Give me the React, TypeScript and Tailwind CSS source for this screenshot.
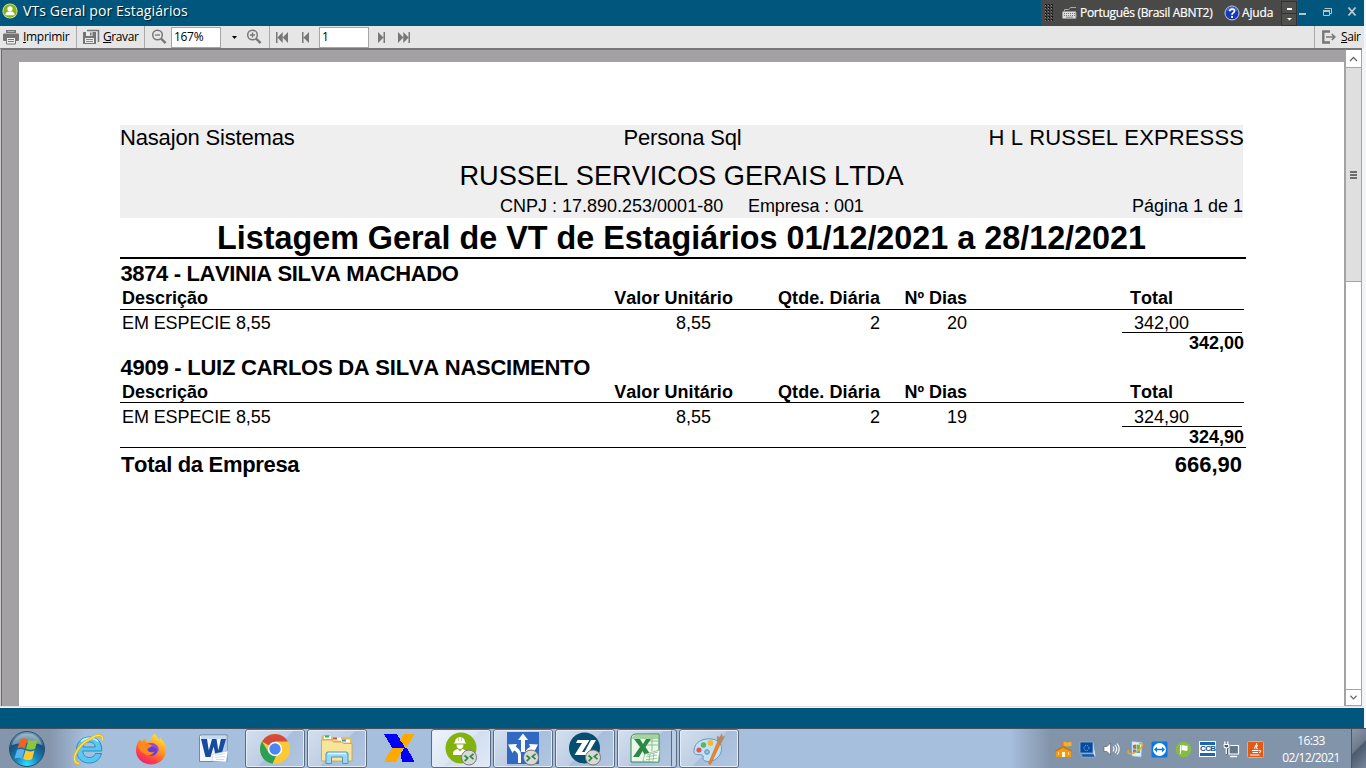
import React from "react";

const UI = "font-['Open_Sans','Noto_Sans',sans-serif]";

function TitleBar() {
  return (
    <header className={`flex h-[26px] w-[1364px] shrink-0 items-stretch bg-[#00567c] text-white ${UI}`}>
      <div className="flex flex-1 items-center pb-[4px] pl-[2px]">
        <svg width="16" height="16" viewBox="0 0 16 16">
          <circle cx="8" cy="8" r="7.6" fill="#dfe8b0" />
          <circle cx="8" cy="8" r="6.8" fill="#86b511" />
          <circle cx="8" cy="5.8" r="2.6" fill="#fff" />
          <path d="M3.4 12.2c0-3 2-3.6 4.6-3.6s4.6.6 4.6 3.6z" fill="#fff" />
        </svg>
        <span className="ml-[5px] whitespace-nowrap text-[14px] leading-[20px] tracking-[0.12px] [text-shadow:1px_1px_1px_#001a28]">
          VTs Geral por Estagiários
        </span>
      </div>
      <div className="flex w-[257px] items-center bg-[#494a47]">
        <svg width="11" height="20" viewBox="0 0 11 20" className="ml-[3px]">
          {[0, 1, 2, 3, 4, 5].map((r) =>
            [0, 1, 2].map((c) => (
              <g key={`${r}-${c}`}>
                <rect x={1 + c * 3} y={1 + r * 3} width="2" height="2" fill="#1c1c1c" />
                <rect x={1 + c * 3} y={2 + r * 3} width="1" height="1" fill="#858585" />
              </g>
            )),
          )}
        </svg>
        <svg width="15" height="14" viewBox="0 0 15 14" className="ml-[7px]">
          <path d="M2.5 5V3.500h4C8 3.500 7 1.500 9 1.500h5" fill="none" stroke="#aaa" />
          <rect x=".5" y="5.500" width="13.500" height="7" rx="1" fill="#ddd" stroke="#999" />
          <path d="M2 7.500h11M2 9.500h11" stroke="#777" strokeDasharray="1 1" />
          <path d="M4 11.200h7" stroke="#888" />
        </svg>
        <span className="ml-[3px] w-[134px] whitespace-nowrap text-[12px] tracking-[-0.3px] [-webkit-text-stroke:0.2px_white]">
          Português (Brasil ABNT2)
        </span>
        <svg width="16" height="16" viewBox="0 0 16 16" className="ml-[10px] shrink-0">
          <circle cx="8" cy="8" r="7" fill="#1738b8" stroke="#c3cbe8" strokeWidth="1" />
          <path d="M2.300 6.500a5.900 5.900 0 0 1 11.400 0c-4-2-7-1.500-11.400 0z" fill="#4468d2" />
          <path d="M5.800 6.300c0-3 4.700-2.900 4.700-.4C10.500 7.700 8 7.500 8 9.700" fill="none" stroke="#fff" strokeWidth="1.700" />
          <rect x="7.100" y="10.900" width="1.900" height="1.900" fill="#fff" />
        </svg>
        <span className="ml-[2px] w-[36px] whitespace-nowrap text-[12px] tracking-[-0.15px] [-webkit-text-stroke:0.2px_white]">Ajuda</span>
        <div className="ml-[3px] flex h-[25px] w-[16px] flex-col border border-[#333] bg-[#50514e]">
          <div className="flex h-[12px] items-center justify-center border-b border-[#333]">
            <div className="mt-[3px] h-[2px] w-[5px] bg-white" />
          </div>
          <svg width="14" height="11" viewBox="0 0 14 11">
            <path d="M5 4h5L7.500 6.500z" fill="#fff" />
          </svg>
        </div>
      </div>
      <svg width="66" height="26" viewBox="0 0 66 26">
        <rect x="1" y="13" width="7" height="2" fill="#b8c3ca" />
        <path d="M26.500 8.500h7v5h-2M25.500 10.500h6v5h-6z" fill="none" stroke="#b8c3ca" />
        <path d="M25 10h7v2h-7z" fill="#b8c3ca" />
        <path d="M50.500 7.500l7 8M57.500 7.500l-7 8" stroke="#c2ccd2" strokeWidth="1.800" />
      </svg>
    </header>
  );
}

function Magnifier({ plus }: { plus?: boolean }) {
  return (
    <svg width="16" height="16" viewBox="0 0 16 16">
      <circle cx="6.500" cy="6" r="4.800" fill="none" stroke="#777" strokeWidth="1.500" />
      <path d="M10 9.500l4.600 4.600" stroke="#777" strokeWidth="2.400" />
      <path d={plus ? "M4 6h5M6.500 3.500v5" : "M4 6h5"} stroke="#777" strokeWidth="1.300" />
    </svg>
  );
}

function Toolbar() {
  return (
    <nav className={`flex h-[22px] w-[1364px] shrink-0 items-center bg-[#e6e6e6] text-[12px] text-black ${UI}`}>
      <div className="flex h-full w-[77px] items-center border-r border-[#aaa]">
        <svg width="16" height="15" viewBox="0 0 16 15" className="ml-[3px]">
          <path d="M3 0h10v3H3z" fill="#777" />
          <path d="M4.500 1.500h7" stroke="#b5b5b5" />
          <rect y="3.500" width="16" height="7.500" rx="1" fill="#747474" />
          <path d="M3.500 7.500h9v6.500h-9z" fill="#eee" stroke="#747474" />
          <path d="M5 9.500h6M5 11.500h6" stroke="#777" />
        </svg>
        <span className="ml-[4px] whitespace-nowrap tracking-[-0.3px]"><u>I</u>mprimir</span>
      </div>
      <div className="flex h-full w-[68px] items-center border-r border-[#aaa]">
        <svg width="17" height="16" viewBox="0 0 17 16" className="ml-[6px]">
          <path d="M4 1.500h11.500V13" fill="none" stroke="#777" strokeWidth="1.600" />
          <path d="M0 3h13v12H0z" fill="#747474" />
          <path d="M3 3h6.500v4H3zM2 9h9v5H2z" fill="#ececec" />
          <path d="M7 3.500h1.500v3H7z" fill="#747474" />
          <path d="M3 10.500h7M3 12.500h7" stroke="#888" />
        </svg>
        <span className="ml-[3px] whitespace-nowrap tracking-[-0.4px]"><u>G</u>ravar</span>
      </div>
      <div className="ml-[6px] flex h-[16px] w-[20px]"><Magnifier /></div>
      <div className="flex h-[21px] w-[50px] items-center border border-[#a5a5a5] bg-white pl-[2px] tracking-[-0.3px]">167%</div>
      <svg width="5" height="3" viewBox="0 0 5 3" className="ml-[11px]"><path d="M0 0h5L2.500 3z" fill="#000" /></svg>
      <div className="ml-[9px] h-[16px] w-[16px]"><Magnifier plus /></div>
      <div className="ml-[7px] h-full w-px bg-[#aaa]" />
      <svg width="12" height="11" viewBox="0 0 12 11" className="ml-[6px]" fill="#777">
        <path d="M0 0h1.500v11H0zM6.700 0v11L1.500 5.500zM12 0v11L6.700 5.500z" />
      </svg>
      <svg width="7" height="11" viewBox="0 0 7 11" className="ml-[14px]" fill="#777">
        <path d="M0 0h1.500v11H0zM7 0v11L1.500 5.500z" />
      </svg>
      <div className="ml-[10px] flex h-[21px] w-[50px] items-center border border-[#a5a5a5] bg-white pl-[2px]">1</div>
      <svg width="7" height="11" viewBox="0 0 7 11" className="ml-[9px]" fill="#777">
        <path d="M5.500 0H7v11H5.500zM0 0v11l5.500-5.500z" />
      </svg>
      <svg width="12" height="11" viewBox="0 0 12 11" className="ml-[13px]" fill="#777">
        <path d="M10.500 0H12v11h-1.500zM0 0v11l5.300-5.500zM5.300 0v11l5.200-5.500z" />
      </svg>
      <div className="ml-auto flex h-full w-[50px] items-center border-l border-[#aaa]">
        <svg width="14" height="14" viewBox="0 0 14 14" className="ml-[7px]" fill="none">
          <path d="M8 1.500H1.300v11H8" stroke="#777" strokeWidth="2.400" />
          <path d="M4 7h8.500M9.800 4l3 3-3 3" stroke="#777" strokeWidth="1.600" />
        </svg>
        <span className="ml-[5px] whitespace-nowrap tracking-[-0.4px]"><u>S</u>air</span>
      </div>
    </nav>
  );
}

const COLS = "grid grid-cols-[491px_122px_147px_87px_163px_114px]";

interface Employee {
  name: string;
  days: string;
  total: string;
  nameClass: string;
  headClass: string;
  rowClass: string;
}

const employees: Employee[] = [
  {
    name: "3874 - LAVINIA SILVA MACHADO",
    days: "20",
    total: "342,00",
    nameClass: "tracking-[-0.37px]",
    headClass: "h-[22px] leading-[22px]",
    rowClass: "h-[22px] leading-[26px]",
  },
  {
    name: "4909 - LUIZ CARLOS DA SILVA NASCIMENTO",
    days: "19",
    total: "324,90",
    nameClass: "tracking-[-0.25px]",
    headClass: "h-[21px] leading-[22px]",
    rowClass: "h-[23px] leading-[28px]",
  },
];

function EmployeeBlock({ e }: { e: Employee }) {
  return (
    <section>
      <h2 className={`h-[28px] whitespace-nowrap pl-[0.5px] text-[22px] font-bold leading-[30px] ${e.nameClass}`}>{e.name}</h2>
      <div className={`${COLS} ${e.headClass} whitespace-nowrap text-[18px] font-bold`}>
        <span className="pl-[2px]">Descrição</span>
        <span className="text-right tracking-[0.06px]">Valor Unitário</span>
        <span className="text-right tracking-[0.08px]">Qtde. Diária</span>
        <span className="text-right">Nº Dias</span>
        <span />
        <span>Total</span>
      </div>
      <div className="h-px w-[1124px] bg-black" />
      <div className={`${COLS} ${e.rowClass} whitespace-nowrap text-[18px]`}>
        <span className="pl-[2px] tracking-[-0.1px]">EM ESPECIE 8,55</span>
        <span className="pr-[22px] text-right">8,55</span>
        <span className="text-right">2</span>
        <span className="text-right">{e.days}</span>
        <span />
        <span className="pl-[4px]">{e.total}</span>
      </div>
      <div className="ml-[1002px] h-px w-[120px] bg-black" />
      <div className="h-[20px] w-[1124px] text-right text-[18px] font-bold leading-[20px]">{e.total}</div>
    </section>
  );
}

function Report() {
  return (
    <main className="w-[1325px] bg-white pl-[101px] pt-[63px] font-['Liberation_Sans',Arial,sans-serif] text-black [font-kerning:none]">
      <div className="w-[1126px]">
        <div className="h-[93px] w-[1123px] bg-[#efefef]">
          <div className="grid h-[25px] grid-cols-3 whitespace-nowrap text-[22px] leading-[25px]">
            <span className="tracking-[-0.17px]">Nasajon Sistemas</span>
            <span className="pl-[2px] text-center tracking-[-0.15px]">Persona Sql</span>
            <span className="-mr-px text-right tracking-[0.13px]">H L RUSSEL EXPRESSS</span>
          </div>
          <div className="h-[50px] whitespace-nowrap text-center text-[27.200px] leading-[51px]">RUSSEL SERVICOS GERAIS LTDA</div>
          <div className="flex h-[12px] justify-between whitespace-nowrap text-[18px] leading-[12px]">
            <div className="flex pl-[380px]">
              <span className="w-[248px]">CNPJ : 17.890.253/0001-80</span>
              <span className="tracking-[-0.1px]">Empresa : 001</span>
            </div>
            <span>Página 1 de 1</span>
          </div>
        </div>
        <h1 className="h-[39px] w-[1123px] whitespace-nowrap text-center text-[32.330px] font-bold leading-[40px]">
          Listagem Geral de VT de Estagiários 01/12/2021 a 28/12/2021
        </h1>
        <div className="h-[2px] bg-black" />
        {employees.map((e) => (
          <EmployeeBlock key={e.name} e={e} />
        ))}
        <div className="h-px bg-black" />
        <div className="flex h-[33px] w-[1122px] justify-between pl-px text-[22px] font-bold leading-[33px]">
          <span className="tracking-[-0.32px]">Total da Empresa</span>
          <span>666,90</span>
        </div>
      </div>
    </main>
  );
}

function ScrollBar() {
  return (
    <aside className="flex w-[17px] flex-col border-x border-[#a4a4a4] bg-white">
      <svg width="15" height="17" viewBox="0 0 15 17" className="shrink-0">
        <path d="M4 11l3.500-3.500L11 11" fill="none" stroke="#666" strokeWidth="1.300" />
      </svg>
      <div className="flex h-[215px] shrink-0 flex-col items-center justify-center gap-px border-y border-[#a4a4a4] bg-[#dfdfdf]">
        <div className="h-[2px] w-[7px] bg-[#6d6d6d]" />
        <div className="h-[2px] w-[7px] bg-[#6d6d6d]" />
        <div className="h-[2px] w-[7px] bg-[#6d6d6d]" />
      </div>
      <div className="flex-1" />
      <svg width="15" height="17" viewBox="0 0 15 17" className="shrink-0 border-y border-[#a4a4a4]">
        <path d="M4 6.500l3.500 3.500L11 6.500" fill="none" stroke="#666" strokeWidth="1.300" />
      </svg>
    </aside>
  );
}

function RemoteBadge() {
  return (
    <g>
      <circle cx="25" cy="25.500" r="7.500" fill="#d9d9d9" stroke="#777" strokeWidth="1" />
      <path d="M20.500 23.500l3.200 2.500-3 3.200M29.500 21.800l-3.200 2.700 3.200 2.700" fill="none" stroke="#2c8a3b" strokeWidth="1.700" />
    </g>
  );
}

function StartOrb() {
  return (
    <svg width="38" height="38" viewBox="0 0 38 38">
      <defs>
        <radialGradient id="orb" cx=".5" cy=".95" r=".95">
          <stop offset="0" stopColor="#35e0ff" />
          <stop offset=".35" stopColor="#1785b8" />
          <stop offset=".7" stopColor="#17527c" />
          <stop offset="1" stopColor="#7fa5bf" />
        </radialGradient>
      </defs>
      <circle cx="19" cy="19" r="17.500" fill="url(#orb)" stroke="#24506f" />
      <path d="M4 15a15.500 15.500 0 0 1 30 0c-9-3-19-3-30 0z" fill="#fff" opacity=".35" />
      <path d="M12.500 9c2.500-1.200 4.800-1 7 .2L16.900 18.500c-2-1.200-4.300-1.300-7.400-.2z" fill="#ef6227" />
      <path d="M20.600 9.800c2.500 1.500 5.400 1.200 9 0L27 18.900c-3.200 1.200-5.900 1-9-.2z" fill="#8cc63c" />
      <path d="M9 19.700c2.900-1.100 5.200-1 7.500.2l-2.500 8.700c-2.300-1.200-4.700-1.200-7.500 0z" fill="#58b4ea" />
      <path d="M17.600 20.300c2.900 1.400 5.400 1.400 8.900.2l-2.500 8.700c-3.200 1.200-6 1.200-8.900-.2z" fill="#fdc92e" />
    </svg>
  );
}

function IEIcon() {
  return (
    <svg width="32" height="32" viewBox="0 0 32 32">
      <path d="M22.500 20.500c-1 2.600-3 4-6 4-4 0-6.600-2.600-6.600-6.500h18.800C29.300 9.500 24.500 4 16.500 4 9 4 3.500 9 3.500 17S8.700 30 16.300 30c6 0 10.500-3.200 12.200-9.500zM10 14c.5-3.500 3-5 6.200-5s5.800 1.700 6.100 5z" fill="#5bc6ef" stroke="#218fc8" strokeWidth="1" fillRule="evenodd" />
      <path d="M8 8.500c4-4 12-5 17 0" fill="none" stroke="#c5f0ff" strokeWidth="1.600" />
      <path d="M6 30.500C-3 30 2 14 17 6 24 1 31 1 29.200 7.500" fill="none" stroke="#e9b90e" strokeWidth="2.800" />
      <path d="M6 30.500C-3 30 2 14 17 6 24 1 31 1 29.200 7.500" fill="none" stroke="#ffe765" strokeWidth="1.100" />
    </svg>
  );
}

function FirefoxIcon() {
  return (
    <svg width="32" height="32" viewBox="0 0 32 32">
      <defs>
        <linearGradient id="fox" x1=".8" y1="0" x2=".2" y2="1">
          <stop offset="0" stopColor="#fff044" />
          <stop offset=".4" stopColor="#ff9a20" />
          <stop offset=".75" stopColor="#ff4048" />
          <stop offset="1" stopColor="#e81c78" />
        </linearGradient>
      </defs>
      <path d="M20 .5c1.500 3 2.500 4.500 5 7 0-1 0-2-.3-3C30 9 31.500 13 31 18c-.7 8-7 13.500-15 13.500S1 25.500 1 17.500C1 13 2.500 9 5 6c.3 1.200.6 2 1.200 2.700C8 7 9.500 6 11.500 5.500c-.6 1.500-.6 2.500 0 3.500h5c-2-3.500.5-6.500 3.500-8.500z" fill="url(#fox)" />
      <circle cx="16.500" cy="16.500" r="6.300" fill="#6540c8" />
      <path d="M12 11c3-2 8-1 10.500 2 1.500 2 1.500 4 .5 6 0-3-2-4-5-5-2-.6-4-1.500-6-3z" fill="#9949e2" />
      <path d="M3 11c3-2 6.500-2 9.500-.5 2 1.200 3.500 1.500 4.500 1.500-.6 2.600-4.500 3-4.500 4.500 0 2.500 4 3.500 7 2-2 4-7.500 5-10 2-3-1-6-4-6.500-9.500z" fill="#ff8a1c" />
    </svg>
  );
}

function WordIcon() {
  return (
    <svg width="31" height="31" viewBox="0 0 31 31">
      <path d="M3 2q-1.500 0-1.500 1.500V28.500h27.500V2z" fill="#f3f8ff" stroke="#55759f" strokeWidth=".8" />
      <path d="M3 3h25v3H3z" fill="#c8daf0" />
      <path d="M22 7h6v12h-6z" fill="#b5cdea" />
      <path d="M3 6h6l1.800 11.500L14 6h4.500l1.800 11.500L23 6h5l-5.300 18h-5l-2-10.500L12.500 24H7.500z" fill="#174c9c" />
      <path d="M15 21l15-3-2 11-14-1z" fill="#fff" stroke="#a9bdd8" strokeWidth=".5" />
      <path d="M17 22.500l10-2M17 24.500l10-1M18 26.500h8" stroke="#b7cbe5" strokeWidth=".7" />
    </svg>
  );
}

function ChromeIcon() {
  return (
    <svg width="32" height="32" viewBox="0 0 32 32">
      <circle cx="16" cy="16" r="15" fill="#fbc934" />
      <path d="M16 16L3 8.500A15 15 0 0 1 29 8.500H16z" fill="#d64a3e" />
      <path d="M3 8.500l7 11.500 7.500 2-4 8.800A15 15 0 0 1 3 8.500z" fill="#2ba055" />
      <circle cx="16" cy="16" r="7.200" fill="#fff" />
      <circle cx="16" cy="16" r="5.700" fill="#4a86ee" />
    </svg>
  );
}

function FolderIcon() {
  return (
    <svg width="34" height="32" viewBox="0 0 34 32">
      <path d="M1.500 4q0-2 2-2h6l2 2h20.500v23h-30.500z" fill="#e5bd56" />
      <path d="M4 3h7v3H4zM13 4.500h8v3h-8zM21 6.500h9v3h-9z" fill="#fff" />
      <path d="M5 2.500h4v2H5z" fill="#2bb741" /><path d="M13 4.500h4v2h-4z" fill="#dd4933" /><path d="M22 6.500h4v2h-4z" fill="#3f8fd8" />
      <path d="M1.500 7h10l2 2h8l2 1.500h8.500V28h-30.500z" fill="#f8e49a" stroke="#c9a240" strokeWidth=".8" />
      <path d="M6 30.500V21q0-2 2-2h18q2 0 2 2v9.500h-5.500V24h-11v6.500z" fill="#9ed7f1" stroke="#4499c6" strokeWidth="1" />
      <path d="M8 20.500h18" stroke="#e5faff" strokeWidth="1.500" />
    </svg>
  );
}

function XIcon() {
  return (
    <svg width="31" height="28" viewBox="0 0 31 28" shapeRendering="crispEdges" className="mb-[2px]">
      <path d="M0 0h13l8 13.500H8z" fill="#0000f8" />
      <path d="M20 0h10.500L23 12.500h-2L16 6z" fill="#ffa800" />
      <path d="M8 14h11l-6.500 13.500H0z" fill="#ffa800" />
      <path d="M20 14h3l7.500 13.500H18L16.500 20z" fill="#0000f8" />
    </svg>
  );
}

function WorkerIcon() {
  return (
    <svg width="34" height="34" viewBox="0 0 34 34">
      <circle cx="17" cy="16" r="15.500" fill="#83b20d" />
      <path d="M11 10a5 5 0 0 1 10 0l1.500 1.500h-13zM12.500 12.500h7c0 6-7 6-7 0zM9 23c0-4.500 1.500-5 5-6l2 2.500 2-2.500c3.500 1 5 1.500 5 6z" fill="#fff" />
      <path d="M14.500 5v4M17.500 5v4" stroke="#a9c750" strokeWidth=".7" />
      <RemoteBadge />
    </svg>
  );
}

function ArrowsIcon() {
  return (
    <svg width="34" height="34" viewBox="0 0 34 34">
      <path d="M1 0h32v32H1z" fill="#2f69c2" />
      <path d="M17 1.500l5 6.500h-3v12h-4V8h-3zM2 12.500l9-.5-1.200 2.700c3 1.800 5 4.300 5.200 7.800V31h-3v-8c-.3-2-1.700-3.500-4-4.500L6.500 21zM32 12.500l-9-.5 1.200 2.700c-3 1.800-5 4-5.200 7.300l3 1c.3-2 1.700-3.500 4-4.500l1.500 2.500z" fill="#fff" />
      <RemoteBadge />
    </svg>
  );
}

function ZIcon() {
  return (
    <svg width="34" height="34" viewBox="0 0 34 34">
      <circle cx="16.500" cy="16" r="15.500" fill="#064e70" />
      <path d="M9.500 8h12l-7.500 12h6l-2 3H6.500L14 11H8zM23 8h5l-7 12h6l-2 3H15z" fill="#fff" />
      <RemoteBadge />
    </svg>
  );
}

function ExcelIcon() {
  return (
    <svg width="31" height="31" viewBox="0 0 31 31">
      <path d="M1 6q0-5 5-5h23v28H1z" fill="#eaf6e9" stroke="#2f8b49" />
      <path d="M2 6q0-4 4-4h22v4H2z" fill="#a3d4a3" />
      <path d="M22 4v14M15 8h13M15 12h13" stroke="#8bc08d" />
      <path d="M4 6h6l3 5 3-5h5l-5.500 8L22 24h-6l-3.500-6L9 24H3l7-10z" fill="#2c8844" />
      <path d="M15 21l15-4-2 12-15-1z" fill="#fff" stroke="#75af7c" strokeWidth=".7" />
      <path d="M17 22l11-3M16 24l11-2M16 26.500l11-1M20 21l-1 7M24 20l-1 8" stroke="#7aba80" strokeWidth=".8" />
    </svg>
  );
}

function PaintIcon() {
  return (
    <svg width="34" height="32" viewBox="0 0 34 32">
      <path d="M2 17C3 8 12 5 20 6s11 7 9 13c-2 7-10 11-16 9-4-1.500 0-5-3-6s-9 1-8-5z" fill="#c3e2f3" stroke="#609bc0" />
      <circle cx="7" cy="17" r="2.600" fill="#e45455" /><circle cx="11.500" cy="12" r="2.700" fill="#5eb35c" />
      <circle cx="18.500" cy="10" r="2.900" fill="#f3ba31" /><circle cx="15" cy="19" r="2.300" fill="#8cc4e7" stroke="#5a91b5" />
      <path d="M25.500 9l3 1.500-10 21-2-1z" fill="#f28424" stroke="#c7641a" strokeWidth=".5" />
      <path d="M25 9l0-6 2.500 1L30 0l.5 3.500L33 3l-4 8z" fill="#b88a62" />
    </svg>
  );
}

const apps = [
  { icon: <IEIcon />, open: false, active: false },
  { icon: <FirefoxIcon />, open: false, active: false },
  { icon: <WordIcon />, open: false, active: false },
  { icon: <ChromeIcon />, open: true, active: false },
  { icon: <FolderIcon />, open: true, active: false },
  { icon: <XIcon />, open: false, active: false },
  { icon: <WorkerIcon />, open: true, active: true },
  { icon: <ArrowsIcon />, open: true, active: false },
  { icon: <ZIcon />, open: true, active: false },
  { icon: <ExcelIcon />, open: true, active: false, stacked: true },
  { icon: <PaintIcon />, open: true, active: false },
];

const trayIcons = [
  <svg key="a" width="17" height="17" viewBox="0 0 17 17"><path d="M1 9.500L8 6l8 3.500V16H1z" fill="#f39a12" /><path d="M.5 10L8 6l8.500 4" fill="none" stroke="#c96f05" strokeWidth="1.300" /><path d="M7.300 0h1.200v7H7.300z" fill="#d97b08" /><path d="M8.500.5L12 1.500l4.500-.5v4L12 5.500l-3.500-1z" fill="#ffae1c" /><path d="M7 11h3v5H7z" fill="#fff4c8" /><path d="M3.500 11v3M13.500 11v3" stroke="#ffe09a" /></svg>,
  <svg key="b" width="17" height="17" viewBox="0 0 17 17"><path d="M1 1h13v11H1z" fill="#064a9b" stroke="#8db4e2" strokeWidth=".8" /><path d="M14 1l2.500 14.500-2-1z" fill="#dde6ef" /><path d="M2 13h12.500l1.500 3H3.500z" fill="#1454a0" stroke="#9dbfe6" strokeWidth=".5" /><circle cx="7.500" cy="7" r="2.500" fill="none" stroke="#85bfff" strokeDasharray="1 1" /></svg>,
  <svg key="c" width="17" height="17" viewBox="0 0 17 17"><path d="M1 5.500h3L7.500 2v12L4 10.500H1z" fill="#fff" stroke="#555" strokeWidth=".6" /><path d="M10 5.500q2 2.500 0 5M12 4q3.500 4 0 8M14 2.500q4.500 5.500 0 11" fill="none" stroke="#fff" strokeWidth="1.100" /></svg>,
  <svg key="d" width="17" height="17" viewBox="0 0 17 17"><path d="M5 .5l10 1-1 14.500-9-1z" fill="#def1fb" stroke="#8ec6e6" strokeWidth=".6" /><path d="M6 4l3-.5V8L6 7.500z" fill="#e55b32" /><path d="M9.500 3.500L13 4v4H9.500z" fill="#76b83f" /><path d="M6 8.500h3V12H6z" fill="#388ed3" /><path d="M9.500 8.500H13V12H9.500z" fill="#3fa5df" /><path d="M1.500 9C-1 15 9 13 14 7c3-4 1-5-2-4" fill="none" stroke="#f2a91f" strokeWidth="1.500" /></svg>,
  <svg key="e" width="17" height="17" viewBox="0 0 17 17"><rect x=".5" y=".5" width="16" height="16" rx="1.500" fill="#087ae0" /><circle cx="8.500" cy="8.500" r="6.500" fill="#fff" /><path d="M3 8.500l3-2.800v2h5v-2l3 2.800-3 2.800v-2H6v2z" fill="#087ae0" /></svg>,
  <svg key="f" width="17" height="17" viewBox="0 0 17 17"><circle cx="8.500" cy="8.500" r="7.800" fill="#83bd45" /><path d="M5 4h1v9H5zM6.500 4.500c2-1 3 .7 6 0v5c-3 .7-4-1-6 0z" fill="#fff" /></svg>,
  <div key="g" className="flex h-[16px] w-[17px] flex-col items-center justify-center border border-white bg-[#1768b4]">
    <span className="h-[8px] w-[15px] bg-white text-center font-['Liberation_Sans',Arial,sans-serif] text-[8px] font-bold leading-[8px] tracking-[-0.6px] text-[#164f98]">CCB</span>
  </div>,
  <svg key="h" width="17" height="17" viewBox="0 0 17 17"><path d="M6 4.500h9.500v8.500H6z" fill="#65788a" stroke="#fff" strokeWidth="1.200" /><path d="M7 15.500h7" stroke="#fff" strokeWidth="1.400" /><path d="M0 3h6.500v3.500L5 8v5.500H3V8L0 6.500z" fill="#4c5967" /><path d="M1.800.5v3M4.800.5v3M1 3.500h4.700v2.500Q3.300 8 1 6zM3.300 7.500V13" fill="none" stroke="#fff" strokeWidth="1.200" /></svg>,
  <svg key="i" width="17" height="17" viewBox="0 0 17 17"><rect x=".5" y=".5" width="16" height="16" rx="1" fill="#df5b16" stroke="#f7a56a" /><path d="M9.500 2c1.500 2.500-3 3-1.500 6M11 4.500c-2 1-2 2-.5 3.500M5 9.500h6.500M5.500 11.500h5.500M3 14h9.500M12 9.500c2.500-.5 2 2 0 2" fill="none" stroke="#fff" strokeWidth="1.100" /></svg>,
];

function Taskbar() {
  return (
    <footer className="flex h-[40px] shrink-0 items-start border-t border-[#464f5c] bg-[linear-gradient(90deg,#8596ac_0px,#8596ac_50px,#a6bfdd_85px,#a6bfdd_1010px,#8294aa_1050px,#8294aa_1366px)]">
      <div className="flex h-[39px] w-[58px] items-center pl-[8px]"><StartOrb /></div>
      {apps.map((a, i) => (
        <div key={i} className="flex h-[39px] w-[62px] shrink-0 items-center justify-center">
          {a.open ? (
            <div className={`flex h-[39px] w-[60px] rounded-[3px] border border-[#5d6b7d] ${a.stacked ? "bg-[#b9cce4]" : ""}`}>
              <div
                className={`flex h-full items-center justify-center rounded-[2px] border border-[#e3ecf7] ${a.stacked ? "w-[54px] border-r-[#5d6b7d]" : "w-full"} ${
                  a.active
                    ? "bg-[linear-gradient(135deg,#edf3fa_0%,#dce7f4_50%,#d0def0_52%,#e1eaf6_100%)]"
                    : "bg-[linear-gradient(135deg,#d3dfef_0%,#bdcde3_50%,#a8bedb_52%,#b2c6e0_100%)]"
                }`}
              >
                {a.icon}
              </div>
            </div>
          ) : (
            a.icon
          )}
        </div>
      ))}
      <div className="ml-auto flex h-[39px] items-center gap-[7px] pr-[17px] pt-[1px]">{trayIcons}</div>
      <div className={`flex w-[60px] flex-col pt-[3px] text-center text-[12px] leading-[17px] text-white ${UI}`}>
        <span className="whitespace-nowrap tracking-[-0.6px]">16:33</span>
        <span className="whitespace-nowrap tracking-[-0.6px]">02/12/2021</span>
      </div>
      <div className="ml-[10px] h-[39px] w-[15px] border-l border-[#4a5566] bg-[linear-gradient(135deg,#8a96a5_0%,#6e7c8e_45%,#4c5a6d_50%,#76859a_100%)]" />
    </footer>
  );
}

export default function App() {
  return (
    <div className="flex h-[768px] w-[1366px] flex-col overflow-hidden bg-[#f1f4f8]">
      <TitleBar />
      <Toolbar />
      <div className="flex h-[659px] w-[1364px] shrink-0 border-b border-[#e5e0e5] bg-[#f4f4f4]">
        <div className="flex w-[1345px] border-l border-t-2 border-l-[#c9c9c9] border-t-[#777] bg-[#a4a1a4]">
          <div className="w-[18px] border-l border-[#6d6b6d]" />
          <div className="flex pt-[12px]"><Report /></div>
        </div>
        <div className="flex border-t-2 border-[#777]"><ScrollBar /></div>
      </div>
      <div className="mt-px flex h-[20px] shrink-0">
        <div className="w-[1364px] bg-[#00567c]" />
      </div>
      <Taskbar />
    </div>
  );
}
